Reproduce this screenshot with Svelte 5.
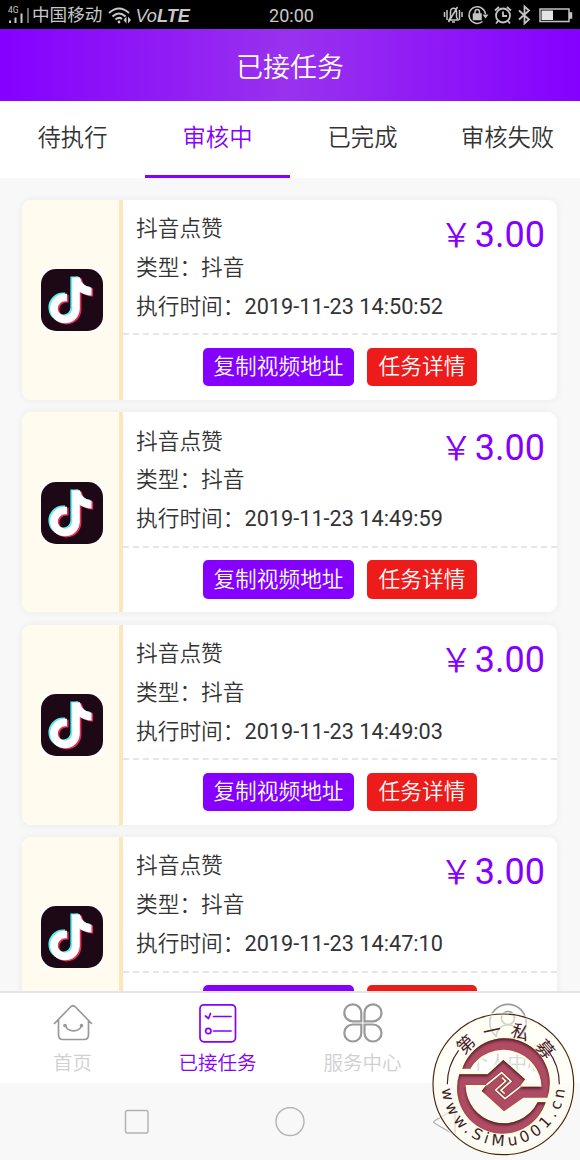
<script lang="ts">
	interface Task {
		title: string;
		type: string;
		time: string;
		price: string;
	}

	const tabs = ['待执行', '审核中', '已完成', '审核失败'];
	let activeTab = $state(1);

	const tasks: Task[] = [
		{ title: '抖音点赞', type: '抖音', time: '2019-11-23 14:50:52', price: '3.00' },
		{ title: '抖音点赞', type: '抖音', time: '2019-11-23 14:49:59', price: '3.00' },
		{ title: '抖音点赞', type: '抖音', time: '2019-11-23 14:49:03', price: '3.00' },
		{ title: '抖音点赞', type: '抖音', time: '2019-11-23 14:47:10', price: '3.00' }
	];

	// Seal emblem: broken ring joined to a diamond, with a hook running through it
	const emblem =
		'M22 98A134 134 0 0 1 277 185H205L147 226L80 165L94 147H32A114 114 0 0 0 248 199H272A136 136 0 0 1 13 115H98L145 72L210 130L194 152H260A115 115 0 0 0 46 98Z';
	const hook = 'M94 147L140 110L168 136L138 163L149 173M196 152L150 188L122 162L152 135L141 125';
</script>

{#snippet note(color: string, x: number, y: number)}
	<g transform="translate({x} {y})">
		<path d="M25 28H23a11 11 0 1 0 11 11V8" fill="none" stroke={color} stroke-width="7.600" />
		<path d="M36 8h2q2 9 11.500 10v8q-7 0-13.500-5z" fill={color} />
	</g>
{/snippet}

<div class="phone">
	<div class="status">
		<div class="carrier">
			<svg width="24" height="20" viewBox="0 0 24 20">
				<text x="0" y="8" font-size="8.500">4G</text>
				<path d="M2 15.500v2.500M7.500 12.500v5.500M13.500 8.500v9.500" stroke="#c8c8c8" stroke-width="2" />
				<path d="M20 3v15" stroke="#666" stroke-width="2" />
			</svg>
			<span>中国移动</span>
			<svg class="wifi" width="24" height="20" viewBox="0 0 24 20" fill="none" stroke="#c8c8c8" stroke-width="2">
				<path d="M1 8Q11-1 21 8M4.500 11.500Q11 5.500 17.500 11.500M7.500 14.500Q11 11.500 14 14" />
				<circle cx="11" cy="17" r="1.400" fill="#c8c8c8" stroke="none" />
				<path d="M18.500 11.500l-3 3.500 3 3.500zM20 11.500l3 3.500-3 3.500z" fill="#c8c8c8" stroke="none" />
			</svg>
			<span class="volte">Vo<b>LTE</b></span>
		</div>
		<span class="clock">20:00</span>
		<svg class="tray" width="132" height="22" viewBox="0 0 132 22" fill="none" stroke="#c4c4c4" stroke-width="1.500">
			<path d="M1.500 8v5M4 6v10M16.500 6v10M19 8v5M6 16h9l-1.500-3V8c0-5-6-5-6 0v5zM14.500 3L5.500 18M9 18h3" />
			<path d="M39.500 17.500A8.300 8.300 0 1 1 42.500 10" />
			<path d="M39.500 10.500h6l-3 4z" fill="#c4c4c4" stroke="none" />
			<path d="M32 10V8c0-3.500 4.500-3.500 4.500 0v2" />
			<path d="M30.500 10h7.500v5.500h-7.500z" fill="#c4c4c4" />
			<g stroke-width="1.800">
				<circle cx="60" cy="11.500" r="7" />
				<path d="M60 7.500v4.500h4M52 6.500l4-3.500M68 6.500l-4-3.500M55 17l-2 2.500M65 17l2 2.500" />
			</g>
			<path d="M76 6.500l10 9-4.500 4V2.500l4.500 4-10 9" stroke-width="1.800" />
			<path d="M97 5h29v12.500H97zM127 9h1.500v5H127z" />
			<path d="M98.500 6.500h11.500V16H98.500z" fill="#e4e4e4" stroke="none" />
		</svg>
	</div>

	<header>已接任务</header>

	<nav class="tabs">
		{#each tabs as tab, i}
			<button class:active={i === activeTab} onclick={() => (activeTab = i)}>{tab}</button>
		{/each}
	</nav>

	<main>
		{#each tasks as task}
			<article>
				<div class="logo">
					<svg width="62" height="62" viewBox="0 0 62 62">
						<rect width="62" height="62" fill="#fff" />
						<rect width="62" height="62" rx="15" fill="#1d0816" />
						{@render note('#e92b59', 2.6, 1.6)}
						{@render note('#62eeee', -0.8, -0.6)}
						{@render note('#fff', 1, 0.5)}
					</svg>
				</div>
				<div class="content">
					<div class="info">
						<div>
							<p>{task.title}</p>
							<p>类型：{task.type}</p>
							<p>执行时间：<time>{task.time}</time></p>
						</div>
						<strong><span>￥</span>{task.price}</strong>
					</div>
					<div class="actions">
						<button class="copy">复制视频地址</button>
						<button class="detail">任务详情</button>
					</div>
				</div>
			</article>
		{/each}
	</main>

	<nav class="bottom">
		<a href="#home">
			<svg width="40" height="40" viewBox="0 0 40 40">
				<path d="M1.500 20.500L17.500 4q2.500-2.500 5 0l16 16.500M5.500 17v15q0 4.500 4.500 4.500h21q4.500 0 4.500-4.500V17M12.500 23c3 6.500 13 6.500 16 0" />
				<circle cx="12" cy="22.500" r="1" />
				<circle cx="28.500" cy="22.500" r="1" />
			</svg>
			<span>首页</span>
		</a>
		<a href="#tasks" class="active">
			<svg width="40" height="40" viewBox="0 0 40 40">
				<rect x="2" y="1.800" width="35.500" height="37" rx="4" />
				<path d="M7.500 13l3 2.500 2-5M15.500 13.500H33M15.500 28H33" />
				<circle cx="10.300" cy="28" r="2.700" />
			</svg>
			<span>已接任务</span>
		</a>
		<a href="#service">
			<svg class="clover" width="40" height="40" viewBox="0 0 40 40">
				<path d="M18.300 18.300H10a8.500 8.500 0 1 1 8.300-8.300zM21.500 18.300V10a8.500 8.500 0 1 1 8.300 8.300zM18.300 21.500v8.300A8.500 8.500 0 1 1 10 21.500zM21.500 21.500h8.300a8.500 8.500 0 1 1-8.300 8.300z" />
			</svg>
			<span>服务中心</span>
		</a>
		<a href="#me">
			<svg width="40" height="40" viewBox="0 0 40 40">
				<circle cx="20" cy="19.500" r="18.200" />
				<circle cx="20" cy="15" r="6.500" />
				<path d="M8 33c2-15 22-15 24 0" />
			</svg>
			<span>个人中心</span>
		</a>
	</nav>

	<div class="keys">
		<svg width="30" height="30" viewBox="0 0 30 30"><rect x="4.500" y="3.500" width="22.500" height="22.500" rx="2" /></svg>
		<svg width="30" height="30" viewBox="0 0 30 30"><circle cx="15" cy="14.500" r="14" /></svg>
		<svg width="30" height="30" viewBox="0 0 30 30"><path d="M26 3v24q0 1-1 .5L6 16.500q-2.500-1.500 0-3L25 2.500q1-.5 1 .5z" /></svg>
	</div>

	<!-- round seal floating over the bottom right corner -->
	<svg class="seal" width="155" height="160" viewBox="0 0 465 480">
		<defs>
			<path id="arc" d="M50 253A185 185 0 0 0 420 253" />
			<filter id="glow"><feGaussianBlur stdDeviation="5" /></filter>
			<filter id="inset" x="-10%" y="-10%" width="120%" height="120%" color-interpolation-filters="sRGB">
				<feComponentTransfer in="SourceAlpha" result="inv"><feFuncA type="table" tableValues="1 0" /></feComponentTransfer>
				<feGaussianBlur in="inv" stdDeviation="4" />
				<feOffset dx="0" dy="5" />
				<feComposite in2="SourceAlpha" operator="in" result="shade" />
				<feFlood flood-color="#351020" flood-opacity=".8" />
				<feComposite in2="shade" operator="in" />
				<feComposite in2="SourceGraphic" operator="over" />
			</filter>
		</defs>
		<circle cx="235" cy="253" r="212" fill="#fffff8" fill-opacity=".15" />
		<circle cx="235" cy="253" r="172" fill="none" stroke="#fffff0" stroke-opacity=".5" stroke-width="68" filter="url(#glow)" />
		<circle cx="235" cy="253" r="211" fill="none" stroke="#ffffe2" stroke-width="9" />
		<circle cx="235" cy="253" r="211" fill="none" stroke="#4a2028" stroke-width="3.500" />
		<path d="M67 253A168 168 0 0 1 101 151M403 253A168 168 0 0 0 369 151" fill="none" stroke="#4a2028" stroke-width="3.500" />
		<g transform="translate(90 108)">
			<path d={emblem} fill="none" stroke="#ffffdc" stroke-width="12" stroke-linejoin="round" />
			<path d={emblem} fill="#b04b64" filter="url(#inset)" />
			<path d={hook} fill="none" stroke="#562232" stroke-opacity=".5" stroke-width="9" />
			<path d={hook} fill="none" stroke="#ffffdc" stroke-width="5" />
		</g>
		<g class="hanzi" text-anchor="middle">
			<text transform="rotate(-43 235 253)" x="235" y="108">第</text>
			<text transform="rotate(-12 235 253)" x="235" y="108">一</text>
			<text transform="rotate(18 235 253)" x="235" y="108">私</text>
			<text transform="rotate(50 235 253)" x="235" y="108">募</text>
		</g>
		<text class="site"><textPath href="#arc" startOffset="14" textLength="552">www.SiMu001.cn</textPath></text>
	</svg>
</div>

<style>
	:global(body) {
		overflow: hidden;
	}

	.phone {
		position: relative;
		display: flex;
		flex-direction: column;
		width: 580px;
		height: 1160px;
		overflow: hidden;
		background: #f8f8f8;
		color: #333;
		font-family: Roboto, 'Noto Sans CJK SC', sans-serif;
		font-weight: 350;
	}

	.status {
		display: grid;
		grid-template-columns: 1fr auto 1fr;
		align-items: center;
		flex: none;
		height: 29px;
		padding: 0 5px 0 8px;
		background: #000;
		color: #c8c8c8;
		font-size: 17.6px;
		font-weight: 400;
	}

	.status text {
		fill: #c8c8c8;
	}

	.carrier {
		display: flex;
		align-items: center;
		line-height: 28px;
	}

	.wifi {
		margin-left: 6px;
	}

	.volte {
		margin-left: 3px;
		padding-top: 2px;
		font-family: 'Liberation Sans', sans-serif;
		font-size: 18.2px;
		font-style: italic;
	}

	.clock {
		font-size: 18px;
	}

	.tray {
		justify-self: end;
	}

	header {
		flex: none;
		height: 72px;
		background: linear-gradient(90deg, #8500ff, #9932ee 50%, #8500ff);
		color: #fff;
		font-size: 27px;
		line-height: 79px;
		text-align: center;
	}

	button {
		padding: 0;
		border: 0;
		font: inherit;
	}

	.tabs {
		display: flex;
		flex: none;
		height: 77px;
		background: #fff;
	}

	.tabs button {
		flex: 1;
		padding-bottom: 5px;
		border-bottom: 3px solid transparent;
		background: none;
		color: #333;
		font-size: 23.3px;
	}

	.tabs .active {
		border-color: #8500ff;
		color: #8500ff;
	}

	main {
		display: flex;
		flex: 1;
		flex-direction: column;
		gap: 12.4px;
		min-height: 0;
		padding: 21.8px 23px 0 22px;
		overflow: hidden;
	}

	article {
		display: flex;
		flex: none;
		height: 200px;
		overflow: hidden;
		border-radius: 9px;
		background: #fff;
		box-shadow: 0 0 8px rgba(0, 0, 0, 0.06);
	}

	.logo {
		display: flex;
		align-items: center;
		justify-content: center;
		width: 97px;
		border-right: 4px solid #f8e8bc;
		background: #fffbee;
	}

	.logo svg {
		margin: 1px 0 0 2px;
	}

	.content {
		flex: 1;
	}

	.info {
		display: flex;
		justify-content: space-between;
		height: 123.2px;
		padding: 10.4px 12px 0 13px;
		border-bottom: 2px dashed #e6e6e6;
	}

	p {
		margin: 0;
		width: 0;
		font-size: 21.7px;
		line-height: 38.8px;
		white-space: nowrap;
	}

	time {
		font-weight: 400;
	}

	strong {
		display: flex;
		color: #8500ff;
		font-size: 36px;
		font-weight: 400;
		line-height: 51px;
	}

	strong span {
		margin-right: 2px;
		font-size: 33px;
		font-weight: 350;
	}

	.actions {
		display: flex;
		justify-content: center;
		gap: 13px;
		padding-top: 12.6px;
	}

	.actions button {
		height: 38.5px;
		border-radius: 5px;
		color: #fff;
		font-size: 21.7px;
		line-height: 36px;
	}

	.copy {
		width: 151px;
		background: #8500ff;
	}

	.detail {
		width: 110px;
		background: #ee1b1b;
	}

	.bottom {
		display: flex;
		flex: none;
		height: 90px;
		border-top: 2px solid #e4e4e4;
		background: #fff;
	}

	.bottom a {
		display: flex;
		flex: 1;
		flex-direction: column;
		align-items: center;
		padding-top: 10px;
		color: #d0d0d0;
		font-size: 19.5px;
		line-height: 41px;
		text-decoration: none;
	}

	.bottom svg {
		flex: none;
		fill: none;
		stroke: #999;
		stroke-width: 1.7;
		stroke-linecap: round;
		stroke-linejoin: round;
	}

	.bottom .clover {
		stroke-width: 2.2;
		stroke-linejoin: miter;
	}

	.bottom .active {
		color: #8500ff;
	}

	.bottom .active svg {
		stroke: #8500ff;
	}

	.keys {
		display: flex;
		flex: none;
		justify-content: space-between;
		height: 77px;
		padding: 0 121px;
		align-items: center;
		background: #f8f8f8;
	}

	.keys svg {
		fill: none;
		stroke: #b2b2b2;
		stroke-width: 1.4;
	}

	.seal {
		position: absolute;
		top: 1000px;
		left: 425px;
	}

	.hanzi {
		fill: #4a2028;
		font-family: 'Noto Sans CJK SC', sans-serif;
		font-size: 54px;
		font-weight: 400;
	}

	.site {
		fill: #3c1c22;
		font-family: 'DejaVu Sans', sans-serif;
		font-size: 46px;
		font-weight: 400;
	}
</style>
